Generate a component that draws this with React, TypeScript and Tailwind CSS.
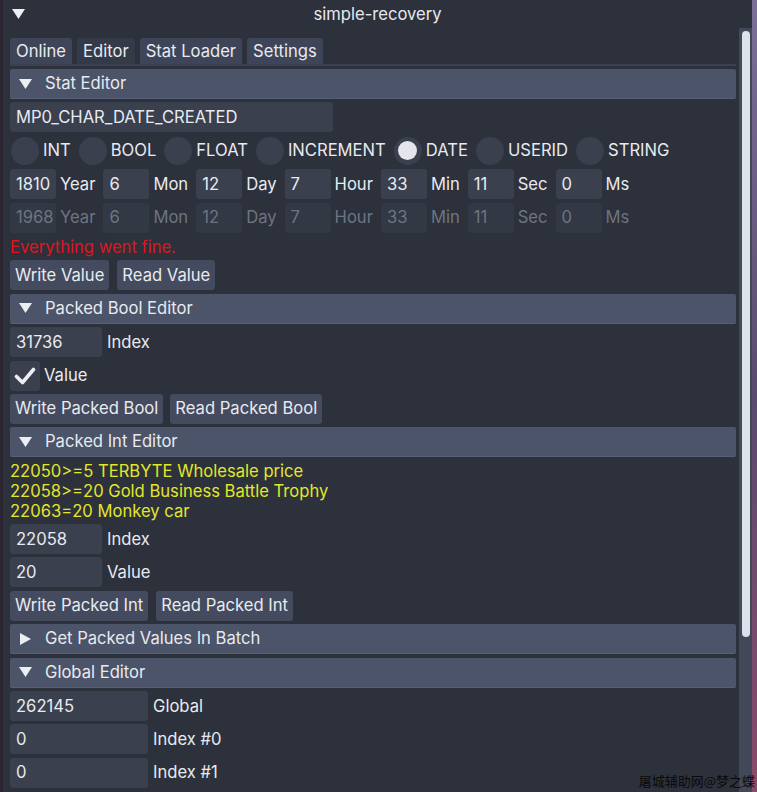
import React from 'react'

const font = { fontFamily: 'Inter, "Noto Sans", sans-serif' }

function Tri({ open = true }: { open?: boolean }) {
  return (
    <svg width="13" height="12" viewBox="0 0 13 12" className="shrink-0">
      {open ? <polygon points="0,1 13,1 6.5,11" fill="#eceef3" /> : <polygon points="1,0 12,6 1,12" fill="#eceef3" />}
    </svg>
  )
}

function Header({ title, open = true }: { title: string; open?: boolean }) {
  return (
    <div className="h-[30px] flex items-center bg-[#4b5469] border-b border-[#56607a] rounded-[2px] pl-[9px] gap-[13px] text-[#e8eaf0]">
      <Tri open={open} />
      <span>{title}</span>
    </div>
  )
}

function Input({ value, w, disabled = false }: { value: string; w: number; disabled?: boolean }) {
  return (
    <div
      className={`h-[30px] flex items-center pl-[6px] rounded-[3px] shrink-0 ${disabled ? 'bg-[#333845] text-[#6e7482]' : 'bg-[#3a404e] text-[#e8eaf0]'}`}
      style={{ width: w }}
    >
      {value}
    </div>
  )
}

function Btn({ label }: { label: string }) {
  return (
    <div className="h-[30px] flex items-center px-[5px] rounded-[3px] bg-[#444b5e] text-[#e8eaf0]">{label}</div>
  )
}

function Radio({ label, checked = false }: { label: string; checked?: boolean }) {
  return (
    <div className="flex items-center gap-[4px] mr-[8px]">
      <div className="w-[28px] h-[28px] rounded-full bg-[#3a404e] flex items-center justify-center">
        {checked && <div className="w-[19px] h-[19px] rounded-full bg-[#e4e6ec]" />}
      </div>
      <span>{label}</span>
    </div>
  )
}

function DateRow({ vals, disabled = false }: { vals: string[]; disabled?: boolean }) {
  const labels = ['Year', 'Mon', 'Day', 'Hour', 'Min', 'Sec', 'Ms']
  return (
    <div className={`h-[30px] flex items-center ${disabled ? 'text-[#6e7482]' : 'text-[#e8eaf0]'}`}>
      {vals.map((v, i) => (
        <div key={i} className="flex items-center">
          <Input value={v} w={46} disabled={disabled} />
          <span className="ml-[4px] mr-[8px]">{labels[i]}</span>
        </div>
      ))}
    </div>
  )
}

function LabeledInput({ value, w, label }: { value: string; w: number; label: string }) {
  return (
    <div className="flex items-center gap-[5px]">
      <Input value={value} w={w} />
      <span>{label}</span>
    </div>
  )
}

export default function App() {
  return (
    <div className="w-[757px] h-[792px] overflow-hidden flex bg-[#2c313c] text-[16.6px] text-[#e8eaf0] relative" style={font}>
      <div className="w-[3px] bg-[#2a2530] shrink-0" />
      <div className="w-[749px] flex flex-col shrink-0">
        <div className="h-[28px] flex items-center relative shrink-0">
          <div className="pl-[9px]">
            <Tri />
          </div>
          <div className="absolute inset-0 flex items-center justify-center text-[#e6e8ee]">simple-recovery</div>
        </div>
        <div className="flex flex-1 min-h-0">
          <div className="flex-1 flex flex-col pl-[7px] pr-[3px] pt-[10px] overflow-hidden">
            <div className="flex gap-[5px] h-[26px] items-end">
              <div className="h-[26px] flex items-center px-[6px] bg-[#3e4558] rounded-t-[3px]">Online</div>
              <div className="h-[26px] flex items-center px-[6px] bg-[#343a48] rounded-t-[3px]">Editor</div>
              <div className="h-[26px] flex items-center px-[6px] bg-[#3e4558] rounded-t-[3px]">Stat Loader</div>
              <div className="h-[26px] flex items-center px-[6px] bg-[#3e4558] rounded-t-[3px]">Settings</div>
            </div>
            <div className="h-[2px] bg-[#3a4152] mb-[3px]" />
            <div className="flex flex-col gap-[3.4px]">
              <Header title="Stat Editor" />
              <Input value="MP0_CHAR_DATE_CREATED" w={323} />
              <div className="h-[30px] flex items-center pl-[1px]">
                <Radio label="INT" />
                <Radio label="BOOL" />
                <Radio label="FLOAT" />
                <Radio label="INCREMENT" />
                <Radio label="DATE" checked />
                <Radio label="USERID" />
                <Radio label="STRING" />
              </div>
              <DateRow vals={['1810', '6', '12', '7', '33', '11', '0']} />
              <DateRow vals={['1968', '6', '12', '7', '33', '11', '0']} disabled />
              <div className="h-[20px] leading-[20px] text-[#e0151b] mt-[1px]">Everything went fine.</div>
              <div className="flex gap-[8px]">
                <Btn label="Write Value" />
                <Btn label="Read Value" />
              </div>
              <Header title="Packed Bool Editor" />
              <LabeledInput value="31736" w={92} label="Index" />
              <div className="h-[30px] flex items-center gap-[4px]">
                <div className="w-[30px] h-[30px] rounded-[3px] bg-[#3a404e] flex items-center justify-center">
                  <svg width="22" height="18" viewBox="0 0 22 18">
                    <path d="M2.5 9.5 L8.5 15.5 L19.5 2.5" stroke="#eceef3" strokeWidth="3.6" fill="none" strokeLinecap="round" strokeLinejoin="round" />
                  </svg>
                </div>
                <span>Value</span>
              </div>
              <div className="flex gap-[7px]">
                <Btn label="Write Packed Bool" />
                <Btn label="Read Packed Bool" />
              </div>
              <Header title="Packed Int Editor" />
              <div className="flex flex-col text-[#e4e62a] leading-[20px]">
                <div>22050&gt;=5 TERBYTE Wholesale price</div>
                <div>22058&gt;=20 Gold Business Battle Trophy</div>
                <div>22063=20 Monkey car</div>
              </div>
              <LabeledInput value="22058" w={92} label="Index" />
              <LabeledInput value="20" w={92} label="Value" />
              <div className="flex gap-[8px]">
                <Btn label="Write Packed Int" />
                <Btn label="Read Packed Int" />
              </div>
              <Header title="Get Packed Values In Batch" open={false} />
              <Header title="Global Editor" />
              <LabeledInput value="262145" w={138} label="Global" />
              <LabeledInput value="0" w={138} label="Index #0" />
              <LabeledInput value="0" w={138} label="Index #1" />
            </div>
          </div>
          <div className="w-[13px] bg-[#424858] shrink-0 pt-[3px] pl-[3px] pr-[2px]">
            <div className="h-[606px] rounded-full bg-[#dde1ec]" />
          </div>
        </div>
      </div>
      <div className="flex-1 bg-gradient-to-b from-[#7c7096] via-[#5a4a70] to-[#8a4a6a]" />
      <div
        className="absolute right-[2px] bottom-[2px] text-[13px] text-[#0a0a0a]"
        style={{ fontFamily: '"Noto Sans CJK SC", sans-serif' }}
      >
        屠城辅助网@梦之蝶
      </div>
    </div>
  )
}
